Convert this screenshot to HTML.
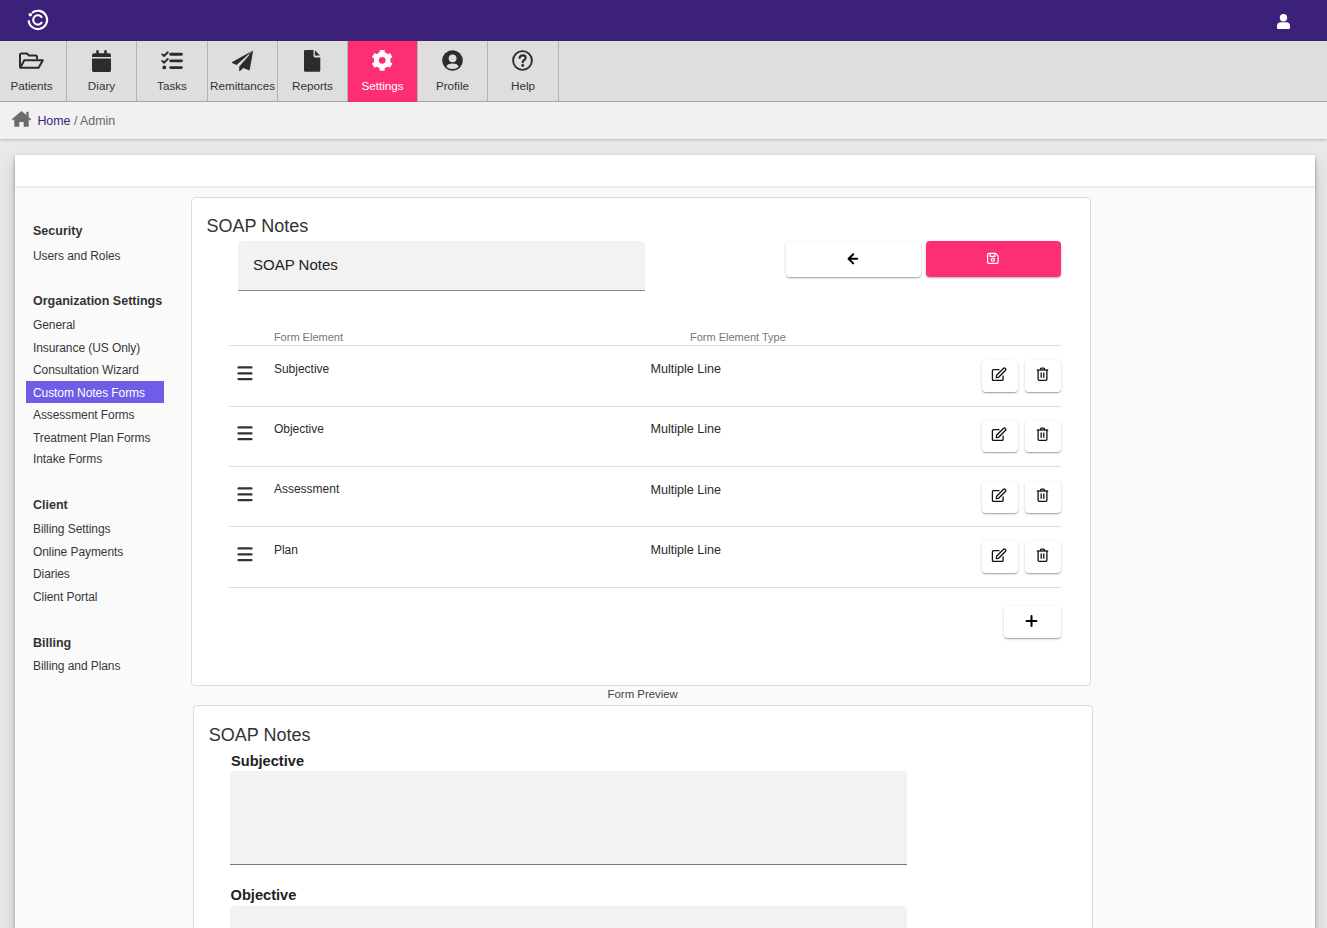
<!DOCTYPE html>
<html><head><meta charset="utf-8"><title>Admin</title>
<style>
html,body{margin:0;padding:0}
body{width:1327px;height:928px;overflow:hidden;position:relative;background:#e9e9e9;font-family:"Liberation Sans",sans-serif}
.t{position:absolute;line-height:1;white-space:nowrap}
</style></head><body>
<div style="position:absolute;left:0px;top:0px;width:1327px;height:41px;background:#3c217b"></div>
<svg style="position:absolute;left:26px;top:8px" width="24" height="24" viewBox="0 0 24 24">
<g fill="none" stroke="#fff" stroke-width="2.1">
<path d="M2.7,12.2 A9.2,9.2 0 1 0 5.99,4.85"/>
<path d="M16.05,9.7 A4.7,4.7 0 1 0 16.05,14.1"/>
</g><circle cx="4.3" cy="6.8" r="1.75" fill="#fff"/></svg>
<svg style="position:absolute;left:1276px;top:12px" width="15" height="18" viewBox="0 0 15 18"><g fill="#fff"><circle cx="7.5" cy="5.8" r="3.7"/><path d="M1,15.9 V14 Q1,10.2 4.8,10.2 H10.2 Q14,10.2 14,14 V15.9 Q14,17 12.9,17 H2.1 Q1,17 1,15.9 Z"/></g></svg>
<div style="position:absolute;left:0px;top:41px;width:1327px;height:60px;background:#dedede;border-bottom:1px solid #aeaeae"></div>
<div style="position:absolute;left:66px;top:41px;width:1px;height:60px;background:#b4b4b4"></div>
<div class="t" style="left:-68.50px;width:200px;text-align:center;top:79.90px;font-size:11.7px;color:#333;font-weight:normal">Patients</div>
<div style="position:absolute;left:136px;top:41px;width:1px;height:60px;background:#b4b4b4"></div>
<div class="t" style="left:1.50px;width:200px;text-align:center;top:79.90px;font-size:11.7px;color:#333;font-weight:normal">Diary</div>
<div style="position:absolute;left:207px;top:41px;width:1px;height:60px;background:#b4b4b4"></div>
<div class="t" style="left:72.00px;width:200px;text-align:center;top:79.90px;font-size:11.7px;color:#333;font-weight:normal">Tasks</div>
<div style="position:absolute;left:277px;top:41px;width:1px;height:60px;background:#b4b4b4"></div>
<div class="t" style="left:142.50px;width:200px;text-align:center;top:79.90px;font-size:11.7px;color:#333;font-weight:normal">Remittances</div>
<div style="position:absolute;left:347px;top:41px;width:1px;height:60px;background:#b4b4b4"></div>
<div class="t" style="left:212.50px;width:200px;text-align:center;top:79.90px;font-size:11.7px;color:#333;font-weight:normal">Reports</div>
<div style="position:absolute;left:348px;top:41px;width:69px;height:61px;background:#fe2e74"></div>
<div style="position:absolute;left:417px;top:41px;width:1px;height:60px;background:#b4b4b4"></div>
<div class="t" style="left:282.50px;width:200px;text-align:center;top:79.90px;font-size:11.7px;color:#fff;font-weight:normal">Settings</div>
<div style="position:absolute;left:487px;top:41px;width:1px;height:60px;background:#b4b4b4"></div>
<div class="t" style="left:352.50px;width:200px;text-align:center;top:79.90px;font-size:11.7px;color:#333;font-weight:normal">Profile</div>
<div style="position:absolute;left:558px;top:41px;width:1px;height:60px;background:#b4b4b4"></div>
<div class="t" style="left:423.00px;width:200px;text-align:center;top:79.90px;font-size:11.7px;color:#333;font-weight:normal">Help</div>
<svg style="position:absolute;left:18px;top:52px" width="27" height="18" viewBox="0 0 27 18"><g fill="none" stroke="#2c2c2c" stroke-width="2" stroke-linejoin="round">
<path d="M2,15.5 V3 Q2,1.5 3.5,1.5 H9 L11,3.6 H17.5 Q19,3.6 19,5.1 V7.3"/>
<path d="M2.3,15.8 L6.3,8.2 H24.8 L20.6,15.8 Z"/></g></svg>
<svg style="position:absolute;left:92px;top:49.5px" width="19" height="22.5" viewBox="0 0 19 22.5"><g fill="#2c2c2c">
<rect x="4.2" y="0.3" width="2.6" height="4" rx="0.4"/><rect x="12.2" y="0.3" width="2.6" height="4" rx="0.4"/>
<path d="M0,7 V5.3 Q0,3.3 2,3.3 H17 Q19,3.3 19,5.3 V7 Z"/>
<path d="M0,8.6 H19 V20 Q19,22.2 16.8,22.2 H2.2 Q0,22.2 0,20 Z"/></g></svg>
<svg style="position:absolute;left:160.5px;top:51px" width="23" height="19" viewBox="0 0 23 19"><g fill="none" stroke="#2c2c2c" stroke-width="1.9" stroke-linecap="round" stroke-linejoin="round">
<path d="M1.3,3.3 L3,5 L6.8,1.3"/><path d="M1.3,10 L3,11.7 L6.8,8"/></g>
<circle cx="3.3" cy="16.4" r="1.9" fill="#2c2c2c"/>
<g stroke="#2c2c2c" stroke-width="2.9" stroke-linecap="round"><path d="M9.8,3.2 H20.4"/><path d="M9.8,9.9 H20.4"/><path d="M9.8,16.6 H20.4"/></g></svg>
<svg style="position:absolute;left:231px;top:49.5px" width="23" height="22" viewBox="0 0 23 22"><g fill="#2c2c2c"><path d="M21.5,0.7 L1.2,12.1 Q0.4,12.7 1.2,13.1 L5.6,14.9 Z"/><path d="M21.6,0.8 L17.6,5 L18.4,5.6 L21.9,1 Z"/><path d="M21.8,0.9 L8.2,16.5 V20.9 Q8.4,21.6 9,21.1 L12.3,18 L17.8,20.3 Q18.5,20.5 18.7,19.8 L22.1,1.3 Q22.1,0.7 21.8,0.9 Z"/></g></svg>
<svg style="position:absolute;left:304px;top:49.8px" width="17" height="22" viewBox="0 0 17 22"><g fill="#2c2c2c"><path d="M1.2,0 H9.5 V6 Q9.5,7.4 10.9,7.4 H16.3 V20.5 Q16.3,21.7 15,21.7 H1.3 Q0,21.7 0,20.4 V1.2 Q0,0 1.2,0 Z"/><path d="M10.9,0.2 L16,5.6 H10.9 Z"/></g></svg>
<svg style="position:absolute;left:372.3px;top:50.3px" width="21" height="21" viewBox="0 0 21 21"><g fill="#fff"><circle cx="10.2" cy="10.35" r="8.3"/><rect x="7.7" y="-0.05" width="5" height="5" rx="0.6" transform="rotate(0 10.2 10.35)"/><rect x="7.7" y="-0.05" width="5" height="5" rx="0.6" transform="rotate(60 10.2 10.35)"/><rect x="7.7" y="-0.05" width="5" height="5" rx="0.6" transform="rotate(120 10.2 10.35)"/><rect x="7.7" y="-0.05" width="5" height="5" rx="0.6" transform="rotate(180 10.2 10.35)"/><rect x="7.7" y="-0.05" width="5" height="5" rx="0.6" transform="rotate(240 10.2 10.35)"/><rect x="7.7" y="-0.05" width="5" height="5" rx="0.6" transform="rotate(300 10.2 10.35)"/></g><circle cx="10.2" cy="10.35" r="3.4" fill="#fe2e74"/></svg>
<svg style="position:absolute;left:442px;top:50px" width="21" height="21" viewBox="0 0 21 21"><defs><mask id="pm"><rect width="21" height="21" fill="#fff"/><circle cx="10.6" cy="8.3" r="3.9" fill="#000"/><ellipse cx="10.5" cy="16.3" rx="5.8" ry="2.8" fill="#000"/></mask></defs><circle cx="10.5" cy="10.5" r="10.3" fill="#2c2c2c" mask="url(#pm)"/></svg>
<svg style="position:absolute;left:512px;top:50px" width="21" height="21" viewBox="0 0 21 21"><circle cx="10.5" cy="10.5" r="9.4" fill="none" stroke="#2c2c2c" stroke-width="1.9"/>
<path d="M7.5,7.8 Q8.3,5.4 10.8,5.4 Q13.6,5.4 13.6,7.8 Q13.6,9.4 11.9,10.3 Q10.8,10.9 10.8,12.3" fill="none" stroke="#2c2c2c" stroke-width="2.1" stroke-linecap="round"/>
<circle cx="10.7" cy="15.5" r="1.4" fill="#2c2c2c"/></svg>
<div style="position:absolute;left:0px;top:102px;width:1327px;height:37px;background:#f1f1f1;box-shadow:0 1px 3px rgba(0,0,0,.22)"></div>
<svg style="position:absolute;left:11px;top:110px" width="22" height="18" viewBox="0 0 22 18"><path fill="#6b6b6b" d="M10.5,1 L0.8,9.2 L1.9,10.5 L3.3,9.3 V16.8 H8.3 V12 H12.7 V16.8 H17.7 V9.3 L19.1,10.5 L20.2,9.2 L17.6,7 V1.8 H15.3 V5.1 Z"/></svg>
<div class="t" style="left:37.4px;top:115.30px;font-size:12.4px;color:#666;font-weight:normal;"><span style="color:#3c217b">Home</span> / Admin</div>
<div style="position:absolute;left:15px;top:155px;width:1300px;height:1000px;background:#fafafa;box-shadow:0 1px 3px rgba(0,0,0,.18),0 10px 20px rgba(0,0,0,.14),0 6px 6px rgba(0,0,0,.14)"></div>
<div style="position:absolute;left:15px;top:155px;width:1300px;height:31px;background:#fff;box-shadow:0 1px 2px rgba(0,0,0,.12)"></div>
<div style="position:absolute;left:26px;top:381px;width:138px;height:22px;background:#6f5de7"></div>
<div class="t" style="left:33px;top:225.22px;font-size:12.5px;color:#333;font-weight:bold;">Security</div>
<div class="t" style="left:33px;top:250.14px;font-size:12px;color:#383838;font-weight:normal;letter-spacing:-0.08px">Users and Roles</div>
<div class="t" style="left:33px;top:295.12px;font-size:12.5px;color:#333;font-weight:bold;">Organization Settings</div>
<div class="t" style="left:33px;top:318.64px;font-size:12px;color:#383838;font-weight:normal;letter-spacing:-0.08px">General</div>
<div class="t" style="left:33px;top:341.74px;font-size:12px;color:#383838;font-weight:normal;letter-spacing:-0.08px">Insurance (US Only)</div>
<div class="t" style="left:33px;top:363.74px;font-size:12px;color:#383838;font-weight:normal;letter-spacing:-0.08px">Consultation Wizard</div>
<div class="t" style="left:33px;top:386.64px;font-size:12px;color:#fff;font-weight:normal;letter-spacing:-0.08px">Custom Notes Forms</div>
<div class="t" style="left:33px;top:408.54px;font-size:12px;color:#383838;font-weight:normal;letter-spacing:-0.08px">Assessment Forms</div>
<div class="t" style="left:33px;top:431.64px;font-size:12px;color:#383838;font-weight:normal;letter-spacing:-0.08px">Treatment Plan Forms</div>
<div class="t" style="left:33px;top:453.34px;font-size:12px;color:#383838;font-weight:normal;letter-spacing:-0.08px">Intake Forms</div>
<div class="t" style="left:33px;top:499.12px;font-size:12.5px;color:#333;font-weight:bold;">Client</div>
<div class="t" style="left:33px;top:522.84px;font-size:12px;color:#383838;font-weight:normal;letter-spacing:-0.08px">Billing Settings</div>
<div class="t" style="left:33px;top:545.84px;font-size:12px;color:#383838;font-weight:normal;letter-spacing:-0.08px">Online Payments</div>
<div class="t" style="left:33px;top:567.94px;font-size:12px;color:#383838;font-weight:normal;letter-spacing:-0.08px">Diaries</div>
<div class="t" style="left:33px;top:590.94px;font-size:12px;color:#383838;font-weight:normal;letter-spacing:-0.08px">Client Portal</div>
<div class="t" style="left:33px;top:637.02px;font-size:12.5px;color:#333;font-weight:bold;">Billing</div>
<div class="t" style="left:33px;top:659.74px;font-size:12px;color:#383838;font-weight:normal;letter-spacing:-0.08px">Billing and Plans</div>
<div style="position:absolute;left:191px;top:197px;width:898px;height:487px;border:1px solid #dcdcdc;border-radius:4px;background:#fff"></div>
<div class="t" style="left:206.5px;top:216.96px;font-size:18px;color:#333;font-weight:normal;">SOAP Notes</div>
<div style="position:absolute;left:238px;top:241px;width:407px;height:49px;background:#f2f2f2;border-radius:4px 4px 0 0;border-bottom:1px solid #8c8c8c"></div>
<div class="t" style="left:253px;top:256.90px;font-size:15px;color:#222;font-weight:normal;">SOAP Notes</div>
<div style="position:absolute;left:786px;top:241px;width:135px;height:36px;background:#fff;border-radius:4px;box-shadow:0 1px 3px rgba(0,0,0,.18),0 1px 1px rgba(0,0,0,.14),0 2px 1px -1px rgba(0,0,0,.12)"></div>
<svg style="position:absolute;left:846px;top:252px" width="13" height="13" viewBox="0 0 13 13"><path d="M7.2,2.2 L2.6,6.8 L7.2,11.4 M3.2,6.8 H11.2" fill="none" stroke="#000" stroke-width="2" stroke-linecap="round" stroke-linejoin="round"/></svg>
<div style="position:absolute;left:926px;top:241px;width:135px;height:36px;background:#fe2e74;border-radius:4px;box-shadow:0 1px 2px rgba(0,0,0,.3)"></div>
<svg style="position:absolute;left:986px;top:252px" width="14" height="13" viewBox="0 0 14 13"><g fill="none" stroke="#fff" stroke-width="1.25"><path d="M2.8,1.4 H9.6 L12.1,3.9 V10.3 Q12.1,11.4 11,11.4 H2.7 Q1.6,11.4 1.6,10.3 V2.5 Q1.6,1.4 2.8,1.4 Z"/><path d="M4.2,1.6 V4.3 H8.9 V1.6"/><circle cx="6.9" cy="7.7" r="1.5"/></g></svg>
<div class="t" style="left:273.9px;top:331.79px;font-size:11px;color:#777;font-weight:normal;">Form Element</div>
<div class="t" style="left:690px;top:331.79px;font-size:11px;color:#777;font-weight:normal;">Form Element Type</div>
<div style="position:absolute;left:229px;top:345px;width:832px;height:1px;background:#dedede"></div>
<div style="position:absolute;left:229px;top:406px;width:832px;height:1px;background:#dedede"></div>
<div style="position:absolute;left:229px;top:466px;width:832px;height:1px;background:#dedede"></div>
<div style="position:absolute;left:229px;top:526px;width:832px;height:1px;background:#dedede"></div>
<div style="position:absolute;left:229px;top:587px;width:832px;height:1px;background:#dedede"></div>
<svg style="position:absolute;left:236px;top:364px" width="18" height="17" viewBox="0 0 18 17"><g stroke="#333" stroke-width="2.4" stroke-linecap="round"><path d="M2.6,3.4 H15.4 M2.6,9.4 H15.4 M2.6,15.1 H15.4"/></g></svg>
<div class="t" style="left:273.9px;top:362.84px;font-size:12px;color:#2b2b2b;font-weight:normal;">Subjective</div>
<div class="t" style="left:650.4px;top:362.93px;font-size:12.6px;color:#2b2b2b;font-weight:normal;">Multiple Line</div>
<div style="position:absolute;left:982px;top:360px;width:36px;height:32px;background:#fff;border-radius:4px;box-shadow:0 1px 3px rgba(0,0,0,.18),0 1px 1px rgba(0,0,0,.14),0 2px 1px -1px rgba(0,0,0,.12)"></div>
<div style="position:absolute;left:1025px;top:360px;width:36px;height:32px;background:#fff;border-radius:4px;box-shadow:0 1px 3px rgba(0,0,0,.18),0 1px 1px rgba(0,0,0,.14),0 2px 1px -1px rgba(0,0,0,.12)"></div>
<svg style="position:absolute;left:991px;top:367px" width="16" height="14" viewBox="0 0 16 14"><g fill="none" stroke="#111" stroke-width="1.3" stroke-linejoin="round"><path d="M8.5,2.6 H2.5 Q1.4,2.6 1.4,3.7 V12.3 Q1.4,13.4 2.5,13.4 H11 Q12.1,13.4 12.1,12.3 V8.6"/><path d="M5.3,10.6 L5.6,8.3 L12.6,1.3 Q13.3,0.7 14,1.3 L14.6,1.9 Q15.2,2.6 14.6,3.3 L7.6,10.3 Z"/></g></svg>
<svg style="position:absolute;left:1036px;top:367px" width="13" height="14" viewBox="0 0 13 14"><g fill="none" stroke="#111" stroke-width="1.3" stroke-linejoin="round"><path d="M0.8,3 H12.2"/><path d="M4.5,2.9 V2 Q4.5,1.1 5.4,1.1 H7.6 Q8.5,1.1 8.5,2 V2.9"/><path d="M2.1,3 V12.2 Q2.1,13.3 3.2,13.3 H9.8 Q10.9,13.3 10.9,12.2 V3"/><path d="M5.2,5.5 V10.8 M7.8,5.5 V10.8"/></g></svg>
<svg style="position:absolute;left:236px;top:424px" width="18" height="17" viewBox="0 0 18 17"><g stroke="#333" stroke-width="2.4" stroke-linecap="round"><path d="M2.6,3.4 H15.4 M2.6,9.4 H15.4 M2.6,15.1 H15.4"/></g></svg>
<div class="t" style="left:273.9px;top:422.64px;font-size:12px;color:#2b2b2b;font-weight:normal;">Objective</div>
<div class="t" style="left:650.4px;top:422.73px;font-size:12.6px;color:#2b2b2b;font-weight:normal;">Multiple Line</div>
<div style="position:absolute;left:982px;top:419.8px;width:36px;height:32px;background:#fff;border-radius:4px;box-shadow:0 1px 3px rgba(0,0,0,.18),0 1px 1px rgba(0,0,0,.14),0 2px 1px -1px rgba(0,0,0,.12)"></div>
<div style="position:absolute;left:1025px;top:419.8px;width:36px;height:32px;background:#fff;border-radius:4px;box-shadow:0 1px 3px rgba(0,0,0,.18),0 1px 1px rgba(0,0,0,.14),0 2px 1px -1px rgba(0,0,0,.12)"></div>
<svg style="position:absolute;left:991px;top:426.8px" width="16" height="14" viewBox="0 0 16 14"><g fill="none" stroke="#111" stroke-width="1.3" stroke-linejoin="round"><path d="M8.5,2.6 H2.5 Q1.4,2.6 1.4,3.7 V12.3 Q1.4,13.4 2.5,13.4 H11 Q12.1,13.4 12.1,12.3 V8.6"/><path d="M5.3,10.6 L5.6,8.3 L12.6,1.3 Q13.3,0.7 14,1.3 L14.6,1.9 Q15.2,2.6 14.6,3.3 L7.6,10.3 Z"/></g></svg>
<svg style="position:absolute;left:1036px;top:426.8px" width="13" height="14" viewBox="0 0 13 14"><g fill="none" stroke="#111" stroke-width="1.3" stroke-linejoin="round"><path d="M0.8,3 H12.2"/><path d="M4.5,2.9 V2 Q4.5,1.1 5.4,1.1 H7.6 Q8.5,1.1 8.5,2 V2.9"/><path d="M2.1,3 V12.2 Q2.1,13.3 3.2,13.3 H9.8 Q10.9,13.3 10.9,12.2 V3"/><path d="M5.2,5.5 V10.8 M7.8,5.5 V10.8"/></g></svg>
<svg style="position:absolute;left:236px;top:485px" width="18" height="17" viewBox="0 0 18 17"><g stroke="#333" stroke-width="2.4" stroke-linecap="round"><path d="M2.6,3.4 H15.4 M2.6,9.4 H15.4 M2.6,15.1 H15.4"/></g></svg>
<div class="t" style="left:273.9px;top:483.44px;font-size:12px;color:#2b2b2b;font-weight:normal;">Assessment</div>
<div class="t" style="left:650.4px;top:483.53px;font-size:12.6px;color:#2b2b2b;font-weight:normal;">Multiple Line</div>
<div style="position:absolute;left:982px;top:480.6px;width:36px;height:32px;background:#fff;border-radius:4px;box-shadow:0 1px 3px rgba(0,0,0,.18),0 1px 1px rgba(0,0,0,.14),0 2px 1px -1px rgba(0,0,0,.12)"></div>
<div style="position:absolute;left:1025px;top:480.6px;width:36px;height:32px;background:#fff;border-radius:4px;box-shadow:0 1px 3px rgba(0,0,0,.18),0 1px 1px rgba(0,0,0,.14),0 2px 1px -1px rgba(0,0,0,.12)"></div>
<svg style="position:absolute;left:991px;top:487.6px" width="16" height="14" viewBox="0 0 16 14"><g fill="none" stroke="#111" stroke-width="1.3" stroke-linejoin="round"><path d="M8.5,2.6 H2.5 Q1.4,2.6 1.4,3.7 V12.3 Q1.4,13.4 2.5,13.4 H11 Q12.1,13.4 12.1,12.3 V8.6"/><path d="M5.3,10.6 L5.6,8.3 L12.6,1.3 Q13.3,0.7 14,1.3 L14.6,1.9 Q15.2,2.6 14.6,3.3 L7.6,10.3 Z"/></g></svg>
<svg style="position:absolute;left:1036px;top:487.6px" width="13" height="14" viewBox="0 0 13 14"><g fill="none" stroke="#111" stroke-width="1.3" stroke-linejoin="round"><path d="M0.8,3 H12.2"/><path d="M4.5,2.9 V2 Q4.5,1.1 5.4,1.1 H7.6 Q8.5,1.1 8.5,2 V2.9"/><path d="M2.1,3 V12.2 Q2.1,13.3 3.2,13.3 H9.8 Q10.9,13.3 10.9,12.2 V3"/><path d="M5.2,5.5 V10.8 M7.8,5.5 V10.8"/></g></svg>
<svg style="position:absolute;left:236px;top:545px" width="18" height="17" viewBox="0 0 18 17"><g stroke="#333" stroke-width="2.4" stroke-linecap="round"><path d="M2.6,3.4 H15.4 M2.6,9.4 H15.4 M2.6,15.1 H15.4"/></g></svg>
<div class="t" style="left:273.9px;top:543.64px;font-size:12px;color:#2b2b2b;font-weight:normal;">Plan</div>
<div class="t" style="left:650.4px;top:543.73px;font-size:12.6px;color:#2b2b2b;font-weight:normal;">Multiple Line</div>
<div style="position:absolute;left:982px;top:540.8px;width:36px;height:32px;background:#fff;border-radius:4px;box-shadow:0 1px 3px rgba(0,0,0,.18),0 1px 1px rgba(0,0,0,.14),0 2px 1px -1px rgba(0,0,0,.12)"></div>
<div style="position:absolute;left:1025px;top:540.8px;width:36px;height:32px;background:#fff;border-radius:4px;box-shadow:0 1px 3px rgba(0,0,0,.18),0 1px 1px rgba(0,0,0,.14),0 2px 1px -1px rgba(0,0,0,.12)"></div>
<svg style="position:absolute;left:991px;top:547.8px" width="16" height="14" viewBox="0 0 16 14"><g fill="none" stroke="#111" stroke-width="1.3" stroke-linejoin="round"><path d="M8.5,2.6 H2.5 Q1.4,2.6 1.4,3.7 V12.3 Q1.4,13.4 2.5,13.4 H11 Q12.1,13.4 12.1,12.3 V8.6"/><path d="M5.3,10.6 L5.6,8.3 L12.6,1.3 Q13.3,0.7 14,1.3 L14.6,1.9 Q15.2,2.6 14.6,3.3 L7.6,10.3 Z"/></g></svg>
<svg style="position:absolute;left:1036px;top:547.8px" width="13" height="14" viewBox="0 0 13 14"><g fill="none" stroke="#111" stroke-width="1.3" stroke-linejoin="round"><path d="M0.8,3 H12.2"/><path d="M4.5,2.9 V2 Q4.5,1.1 5.4,1.1 H7.6 Q8.5,1.1 8.5,2 V2.9"/><path d="M2.1,3 V12.2 Q2.1,13.3 3.2,13.3 H9.8 Q10.9,13.3 10.9,12.2 V3"/><path d="M5.2,5.5 V10.8 M7.8,5.5 V10.8"/></g></svg>
<div style="position:absolute;left:1004px;top:606px;width:57px;height:32px;background:#fff;border-radius:4px;box-shadow:0 1px 3px rgba(0,0,0,.18),0 1px 1px rgba(0,0,0,.14),0 2px 1px -1px rgba(0,0,0,.12)"></div>
<svg style="position:absolute;left:1025px;top:614px" width="13" height="13" viewBox="0 0 13 13"><path d="M6.5,2 V11.9 M1.6,6.9 H11.4" stroke="#000" stroke-width="2" stroke-linecap="round"/></svg>
<div class="t" style="left:542.70px;width:200px;text-align:center;top:689.05px;font-size:11.4px;color:#444;font-weight:normal">Form Preview</div>
<div style="position:absolute;left:193px;top:705px;width:898px;height:400px;border:1px solid #dcdcdc;border-radius:4px;background:#fff"></div>
<div class="t" style="left:208.7px;top:725.76px;font-size:18px;color:#333;font-weight:normal;">SOAP Notes</div>
<div class="t" style="left:231px;top:753.64px;font-size:14.6px;color:#222;font-weight:bold;">Subjective</div>
<div style="position:absolute;left:230px;top:771px;width:677px;height:93px;background:#f2f2f2;border-radius:4px 4px 0 0;border-bottom:1px solid #777"></div>
<div class="t" style="left:230.6px;top:888.14px;font-size:14.6px;color:#222;font-weight:bold;">Objective</div>
<div style="position:absolute;left:230px;top:906px;width:677px;height:92px;background:#f2f2f2;border-radius:4px 4px 0 0;border-bottom:1px solid #777"></div>
</body></html>
